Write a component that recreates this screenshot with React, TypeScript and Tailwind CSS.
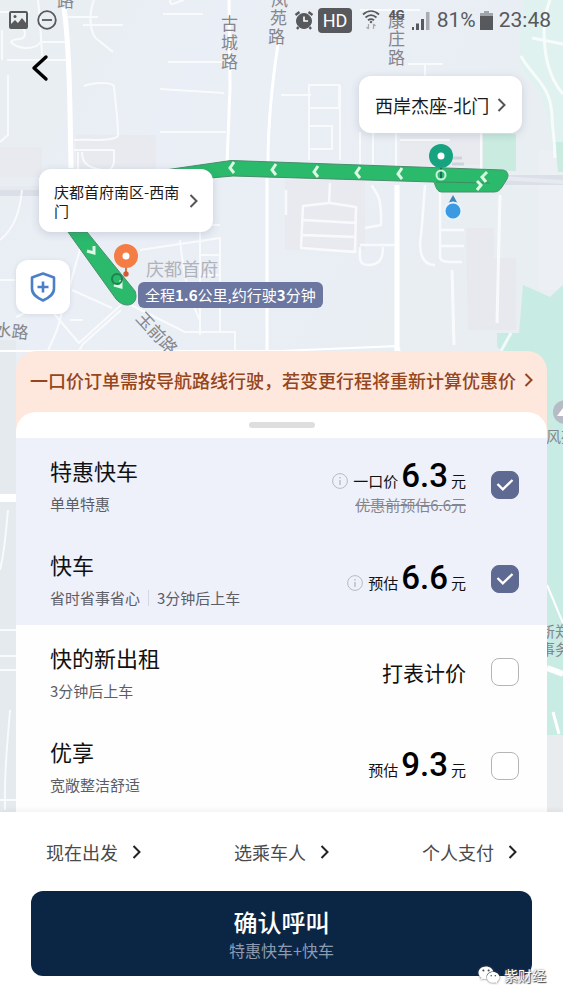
import { useState, type ReactNode } from 'react';
import { FaWeixin } from 'react-icons/fa';

interface Ride {
  id: string;
  name: string;
  tags: string[];
  priceLabel?: string;
  price?: string;
  oldPrice?: string;
  meterText?: string;
  info?: boolean;
}

const RIDES: Ride[] = [
  { id: 'tehui', name: '特惠快车', tags: ['单单特惠'], priceLabel: '一口价', price: '6.3', oldPrice: '优惠前预估6.6元', info: true },
  { id: 'kuaiche', name: '快车', tags: ['省时省事省心', '3分钟后上车'], priceLabel: '预估', price: '6.6', info: true },
  { id: 'taxi', name: '快的新出租', tags: ['3分钟后上车'], meterText: '打表计价' },
  { id: 'youxiang', name: '优享', tags: ['宽敞整洁舒适'], priceLabel: '预估', price: '9.3' },
];

const OPTIONS = ['现在出发', '选乘车人', '个人支付'];

export default function App() {
  const [selected, setSelected] = useState<string[]>(['tehui', 'kuaiche']);

  const toggle = (id: string) =>
    setSelected((prev) => (prev.includes(id) ? prev.filter((s) => s !== id) : [...prev, id]));

  const summary = RIDES.filter((r) => selected.includes(r.id)).map((r) => r.name).join('+');

  return (
    <div className="relative flex min-h-svh flex-col overflow-hidden bg-[#eceff4] font-['Noto_Sans_CJK_SC',sans-serif] text-[#111]">
      <MapCanvas />

      <div className="relative min-h-[351px] flex-1">
        <StatusBar />
        <button aria-label="返回" className="mt-3 ml-6 flex size-8 items-center justify-center text-black">
          <svg width="18" height="28" viewBox="0 0 18 28" fill="none" stroke="currentColor" strokeWidth="3.4" strokeLinecap="round" strokeLinejoin="round">
            <path d="M15 3 3 14l12 11" />
          </svg>
        </button>
        <MapPins />
      </div>

      <main className="relative mx-4 rounded-t-[20px] bg-[#fee8dd]">
        <button className="flex h-[61px] w-full items-center justify-between px-[14px] pb-1 text-[18px] leading-6 font-medium text-[#934620]">
          <span className="whitespace-nowrap">一口价订单需按导航路线行驶，若变更行程将重新计算优惠价</span>
          <Chevron />
        </button>

        <section className="overflow-hidden rounded-t-[20px] bg-white">
          <div className="flex h-[26px] items-center justify-center">
            <span className="h-1.5 w-[66px] rounded-full bg-[#dededf]" />
          </div>
          {RIDES.map((ride) => (
            <RideRow key={ride.id} ride={ride} checked={selected.includes(ride.id)} onToggle={() => toggle(ride.id)} />
          ))}
        </section>
      </main>

      <footer className="relative bg-white px-[31px] pb-6 shadow-[0_-2px_6px_rgba(0,0,0,0.05)]">
        <div className="flex h-[79px] items-center justify-between px-[15px]">
          {OPTIONS.map((label) => (
            <button key={label} className="flex items-center gap-3.5 text-[18px] leading-6 text-[#4a4a4a]">
              {label}
              <span className="text-[#222]">
                <Chevron />
              </span>
            </button>
          ))}
        </div>
        <button className="flex h-[85px] w-full flex-col items-center justify-center rounded-xl bg-[#0b2645]">
          <span className="text-[24px] leading-8 font-medium text-white">确认呼叫</span>
          <span className="text-[16px] leading-6 text-[#8b9cb2]">{summary}</span>
        </button>
        <div className="absolute right-[17px] bottom-3.5 flex items-center gap-1 text-white">
          <FaWeixin className="size-[22px] drop-shadow-[0_0_1px_#555]" />
          <span className="text-[14px] leading-[22px] [text-shadow:1px_1px_1px_#444,0_0_2px_#666]">紫财经</span>
        </div>
      </footer>
    </div>
  );
}

function RideRow({ ride, checked, onToggle }: { ride: Ride; checked: boolean; onToggle: () => void }) {
  return (
    <label className={`flex min-h-[93px] items-center pr-7 pl-[34px] even:min-h-[94px] ${checked ? 'bg-[#eef0fa]' : 'bg-[#fefefe]'}`}>
      <div className="flex flex-1 flex-col gap-1.5">
        <span className="text-[22px] leading-8">{ride.name}</span>
        <span className="flex items-center text-[15px] leading-6 text-[#5c5d66]">
          {ride.tags.map((tag, i) => (
            <span key={tag} className="flex items-center">
              {i > 0 && <span className="mx-2 h-4 w-px bg-[#d5d8e4]" />}
              {tag}
            </span>
          ))}
        </span>
      </div>

      <div className="flex flex-col items-end">
        {ride.meterText ? (
          <span className="text-[21px] leading-8">{ride.meterText}</span>
        ) : (
          <span className="flex items-baseline gap-[3px] pt-1 text-[15px] leading-8">
            {ride.info && <InfoIcon />}
            <span>{ride.priceLabel}</span>
            <span className="font-['Roboto',sans-serif] text-[33px] font-medium text-black">{ride.price}</span>
            <span>元</span>
          </span>
        )}
        {ride.oldPrice && <s className="-mt-0.5 text-[15px] leading-5 text-[#85868c]">{ride.oldPrice}</s>}
      </div>

      <span className="ml-[25px] grid size-7 place-items-center">
        <input
          type="checkbox"
          checked={checked}
          onChange={onToggle}
          aria-label={ride.name}
          className="col-start-1 row-start-1 size-7 appearance-none rounded-lg border border-[#b5b5b8] bg-white checked:border-[#5f6a92] checked:bg-[#5f6a92]"
        />
        {checked && (
          <svg className="pointer-events-none col-start-1 row-start-1" width="18" height="14" viewBox="0 0 18 14" fill="none" stroke="#fff" strokeWidth="2.4">
            <path d="m1.5 6 5.3 5.3L16.5 2" />
          </svg>
        )}
      </span>
    </label>
  );
}

function Chevron() {
  return (
    <svg width="9" height="14" viewBox="0 0 9 14" fill="none" stroke="currentColor" strokeWidth="2">
      <path d="m1.5 1 6 6-6 6" />
    </svg>
  );
}

function InfoIcon() {
  return (
    <svg className="mr-0.5 translate-y-0.5" width="16" height="16" viewBox="0 0 16 16" fill="none" stroke="#b9bac1">
      <circle cx="8" cy="8" r="7.4" />
      <path d="M8 7v5M8 4v1.5" strokeWidth="1.4" />
    </svg>
  );
}

function StatusBar() {
  return (
    <div className="flex h-10 items-center justify-between pr-3 pl-[9px] font-['Roboto',sans-serif] text-[#58595c]">
      <div className="flex items-center gap-[9px]">
        <svg width="19" height="18" viewBox="0 0 19 18" fill="none">
          <rect x="1" y="1" width="17" height="16" rx="1" stroke="currentColor" strokeWidth="2" />
          <path d="M2 16v-3l4-4 3 3 4-5 4 5v4z" fill="currentColor" />
          <circle cx="6" cy="5.5" r="1.5" fill="currentColor" />
        </svg>
        <svg width="20" height="20" viewBox="0 0 20 20" fill="none" stroke="currentColor" strokeWidth="1.8">
          <circle cx="10" cy="10" r="8.8" />
          <path d="M5 10h10" />
        </svg>
      </div>
      <div className="flex items-center text-[21px] leading-6">
        <svg width="20" height="20" viewBox="0 0 20 20" fill="none" stroke="currentColor">
          <circle cx="10" cy="11" r="7.5" fill="currentColor" />
          <path d="m1.5 5 4-3M18.500 5l-4-3M4.500 17 3 19M15.500 17l1.500 2" strokeWidth="2.4" />
          <path d="M10 6.500V11h4" stroke="#fff" strokeWidth="1.6" />
        </svg>
        <span className="ml-1 rounded-sm bg-[#58595c] px-[5px] text-[18px] leading-[25px] text-white">HD</span>
        <svg className="ml-2.5" width="18" height="20" viewBox="0 0 18 20" fill="none" stroke="currentColor" strokeWidth="1.8">
          <path d="M1 4.500c5-4.500 11-4.500 16 0M3.500 7.500c3.500-3 7.500-3 11 0M6 10.300c2-1.600 4-1.600 6 0" />
          <path d="m9 10.500 1.500 1.500L9 13.500 7.500 12z" fill="currentColor" stroke="none" />
          <path d="M6.500 14v5M4.500 17l2 2M11.500 19v-5M13.500 16l-2-2" stroke="#aaa" strokeWidth="1.2" />
        </svg>
        <span className="mb-2.5 ml-2 text-[13px] leading-3 font-bold">4G</span>
        <svg className="ml-1.5" width="20" height="19" viewBox="0 0 20 19" fill="currentColor">
          <path d="M1 16h2v3H1zM5 12.500h3V19H5zM10 8h3v11h-3z" />
          <path d="M15 1h3.500v18H15z" opacity=".45" />
        </svg>
        <span className="ml-1.5">81%</span>
        <svg className="ml-1" width="13" height="19" viewBox="0 0 13 19" fill="currentColor">
          <path d="M4 0h5v2h4v4H0V2h4z" opacity=".5" />
          <path d="M0 5h13v14H0z" />
        </svg>
        <span className="ml-1.5">23:48</span>
      </div>
    </div>
  );
}

function PlaceCard({ className, children }: { className: string; children: ReactNode }) {
  return (
    <button className={`absolute flex items-center justify-between rounded-xl bg-white text-left text-[#1a1a1a] shadow-[0_2px_8px_rgba(60,70,100,0.18)] ${className}`}>
      {children}
      <span className="text-[#555]">
        <Chevron />
      </span>
    </button>
  );
}

function MapPins() {
  return (
    <>
      <PlaceCard className="top-[76px] left-[359px] h-[57px] w-[163px] px-4 text-[18px] leading-6">西岸杰座-北门</PlaceCard>
      <PlaceCard className="top-[169px] left-[39px] h-[63px] w-[174px] px-[15px] text-[15px] leading-[19px]">
        <span className="w-[126px] break-all">庆都首府南区-西南门</span>
      </PlaceCard>
      <button aria-label="安全中心" className="absolute top-[260px] left-4 grid size-[54px] place-items-center rounded-xl bg-white text-[#4b80c8] shadow-[0_1px_5px_rgba(60,70,100,0.12)]">
        <svg width="26" height="30" viewBox="0 0 26 30" fill="none" stroke="currentColor" strokeWidth="2.6" strokeLinejoin="round">
          <path d="m13 1.500 11 4v11c0 6-4.500 9-11 12-6.500-3-11-6-11-12v-11z" />
          <path d="M13 9.500v11M7.500 15h11" />
        </svg>
      </button>
      <p className="absolute top-[282px] left-[138px] rounded-md bg-[#6b77a0] px-[7px] text-[15px] leading-[26px] whitespace-nowrap text-white">
        全程<b>1.6</b>公里,约行驶<b>3</b>分钟
      </p>
    </>
  );
}

function MapCanvas() {
  return (
    <svg className="absolute inset-0 size-full" viewBox="0 0 563 1000" preserveAspectRatio="xMinYMin slice" fill="none">
      <defs>
        <linearGradient id="land" x1="0" y1="0" x2="1" y2="1">
          <stop offset="0" stopColor="#e9eef1" />
          <stop offset=".2" stopColor="#eaeef6" />
          <stop offset="1" stopColor="#e9eef0" />
        </linearGradient>
      </defs>
      <path d="M0 0h563v1000H0z" fill="url(#land)" />

      {/* blocks */}
      <path d="M0 147h42v30H0zM76 135h80v35H76zM400 135h80v30h-80zM285 180h80v70h-80z" fill="#e8eaf0" />
      <path d="M466 228h28v30h22v72h-48z" fill="#e7e9ef" />
      <path d="M0 340h16v480H0z" fill="#e4eaed" />

      {/* parks */}
      <path d="M524 0h39v290h-8V160c-4-20-8-55-16-68-8-12-20-22-20-38 0-20 6-38 5-54z" fill="#e0f2ef" />
      <path d="M539 150h24v140h-24z" fill="#ecf0f4" />
      <path d="M483 134h33v37h-33zM555 142h8v30h-5z" fill="#c9ebe0" />
      <path d="m523 285 27 12 13-12v450h-25V400l-41-54v-13h22z" fill="#c8ebe3" />
      <path d="M547 735h16v80h-16z" fill="#e8ecef" />

      {/* main road */}
      <path d="M0 191h60M500 180h63" stroke="#dbdfe7" strokeWidth="10" />
      <path d="M0 188h60M500 178l63 4" stroke="#e7e9f0" strokeWidth="4" />

      {/* streets */}
      <g stroke="#fff" strokeLinejoin="round">
        <path d="M64 8c5 35 6 90 7 160" strokeWidth="5" />
        <path d="M397 185v168" strokeWidth="5" />
        <path d="m229 0 1 88-3 75M278 44c-6 40-10 80-10 118M267 178v172" strokeWidth="3" />
        <g opacity=".75">
          <path d="M68 17h30M83 25h40M94 0c-6 15-4 35 4 40l15 12M38 0c2 18 3 38 4 56M0 12h30M7 60h60M2 30v30M66 42H41c-8 10-25 6-30 0 2-5 14 0 14-8s-6-9-9-12M163 14h40M170 0c0 8 5 2 14 0M168 62h55M160 89l64 4M160 132h66" strokeWidth="2" />
          <path d="M84 86c10-4 28-4 30 0 1 15 4 30 4 50-6 6-30 3-44 4M74 150h40c0 12 1 14-4 20M78 152v17M82 152c0 14 10 16 20 18M8 75v60l-8 7" strokeWidth="2" />
          <path d="M281 95h30M309 85h30v23h-30v-23v75M309 126h23v23h-23zM340 85v75M360 132v32M373 132v32M396 132v40M400 140h50M425 65v12M360 10h60M408 64h35M481 132v40" strokeWidth="2" />
          <path d="m330 183-1 20-26 3-2 42 54 4 1-45-26-4M303 220l54 3M302 235l54 2M372 185c2 8 10 5 9 40l-16 3M360 247c0 10-2 18 8 18 13 0 15-8 15-18M360 245h35M286 190v25M425 185c-2 25-3 45-5 58 0 15 5 22 15 22M440 192v65c0 6 12 5 22 5M440 230h24M440 246h24" strokeWidth="2.500" />
          <path d="m500 195-3 128M452 270l2 75M511 333l-10 18M521 56c10 20 30 28 31 60 0 15 3 20 3 42M550 0c-10 25-8 70 13 94M532 38l31 6" strokeWidth="3" />
          <path d="M85 232 57 330l-10 23M121 305l-42 38-34-40-29 14M121 310l-38 34-6 10M125 302l60 30h50v20M140 250l80-12v95M200 215v120M200 225h20M200 255h20M200 275h20M180 240c4 40 10 60 20 80M72 290l40 18M70 320h13M0 280h15M0 240c15-12 20-30 22-50" strokeWidth="2" />
          <path d="M0 630h16M0 656h16M0 670h16M8 510c-2 20-3 40-8 60M10 710c-3 40-6 60-5 100M0 800h16" strokeWidth="2" />
        </g>
        <path d="M0 498h16" strokeWidth="8" />
        <path d="m547 585 16 38" strokeWidth="2" />
        <path d="m547 668 16 6" strokeWidth="6" />
        <path d="m553 712 6 22" strokeWidth="3" />
        <path d="M0 351h281l117-5 2 6" strokeWidth="2" />
      </g>

      {/* road names */}
      <g className="fill-[#85868c] font-['Noto_Sans_CJK_SC',sans-serif] text-[17px]">
        <text x="57" y="7">路</text>
        <text x="221" y="30">古</text>
        <text x="221" y="49">城</text>
        <text x="221" y="68">路</text>
        <text x="271" y="6">凤</text>
        <text x="270" y="24">苑</text>
        <text x="268" y="43">路</text>
        <text x="388" y="27">康</text>
        <text x="388" y="45">庄</text>
        <text x="388" y="64">路</text>
        <text x="-6" y="336" transform="rotate(6 0 336)">水路</text>
        <text x="135" y="319" transform="rotate(47 135 319)">玉前路</text>
        <text x="146" y="276" className="fill-[#b0b3bb] text-[18px]">庆都首府</text>
        <text x="546" y="442" className="text-[15px]">风苑</text>
        <text x="540" y="637" className="text-[15px]">新郑</text>
        <text x="540" y="655" className="text-[15px]">事务</text>
      </g>
      <circle cx="565" cy="412" r="12" fill="#b5bcc5" />
      <path d="m557 416 6-8v8z" fill="#fff" />

      {/* route */}
      <g fill="#2bb96b" stroke="#4c8c6d">
        <path d="m165 170 66-9.500 272 9.500c5 1 6 5 4 9l-5 8c-2 3-4 5-8 5h-52c-5 0-6-5-8-10l-201-6-23 2h-40z" />
        <path d="m68 232 19 0 48 59c5 14-10 19-19 8z" />
      </g>
      <path d="m436 182 54 1" stroke="#3a8f63" />
      <path
        d="m234 162-4 6 4 5M276 164l-4 6 4 5M318 166l-4 6 4 5M360 167l-4 6 4 5M402 168l-4 6 4 5M487 172l-5 5 4 5M477 181l4 4-4 5M87 251l7 2 0-7M114 285l7 2 0-7"
        stroke="#ddf8e4"
        strokeWidth="3"
      />

      {/* start and destination */}
      <path d="M452 158h10M452 164h12" stroke="#cfd4dc" strokeWidth="3" />
      <path d="M441 160v18" stroke="#176e5c" strokeWidth="2" />
      <circle cx="441" cy="175" r="4.500" stroke="#c9f5df" strokeWidth="2" />
      <circle cx="441" cy="156" r="12" fill="#17a380" />
      <circle cx="441" cy="156" r="3.500" fill="#fff" />
      <circle cx="117" cy="279" r="5" stroke="#21804e" strokeWidth="2" />
      <path d="M126 260v13" stroke="#d9754a" strokeWidth="2" />
      <circle cx="126" cy="274" r="2.700" fill="#cf5b32" />
      <circle cx="126" cy="256" r="12" fill="#f47d45" />
      <circle cx="126" cy="256" r="3.500" fill="#fff" />
      <path d="m453 195 5 9h-10z" fill="#3f88b5" />
      <circle cx="453" cy="211" r="8.500" fill="#3c9ae3" stroke="#e5f4fd" strokeWidth="2" />
    </svg>
  );
}
